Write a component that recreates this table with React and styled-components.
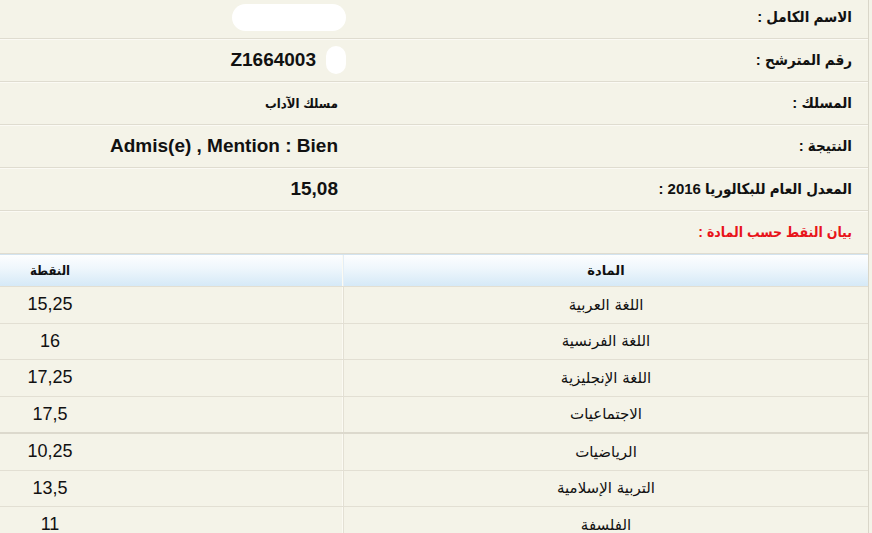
import React from "react";
import styled, { createGlobalStyle } from "styled-components";

const GlobalStyle = createGlobalStyle`
  html, body { margin: 0; padding: 0; }
  body {
    background: #f4f3e8;
    font-family: "Liberation Sans", "DejaVu Sans Condensed", "DejaVu Sans", Arial, sans-serif;
    color: #111;
    overflow: hidden;
  }
`;

const Page = styled.div`
  width: 868px;
  direction: rtl;
  border-right: 1px solid #d9d6c9;
  background: #f4f3e8;
  margin-top: -4px;
`;

const InfoRow = styled.div`
  display: grid;
  grid-template-columns: 513px 1fr;
  height: 42px;
  border-bottom: 1px solid #dfdcd0;
  box-shadow: 0 1px 0 #fbfaf4;
`;

const Label = styled.div`
  display: flex;
  align-items: center;
  padding-right: 16px;
  font-weight: bold;
  color: ${(p) => (p.$red ? "#e8141b" : "#111")};
  font-size: ${(p) => (p.$red ? "14px" : "15px")};
`;

const Value = styled.div`
  display: flex;
  align-items: center;
  gap: 10px;
  padding-right: 17px;
  font-weight: bold;
  font-size: ${(p) => (p.$small ? "13px" : "19px")};
  white-space: nowrap;
`;

const Blot = styled.span`
  display: inline-block;
  width: ${(p) => p.$w}px;
  height: ${(p) => p.$h}px;
  background: #ffffff;
  border-radius: 14px;
  margin-right: -8px;
  filter: blur(0.6px);
`;

const Grades = styled.div`
  border-top: 1px solid #d3e3ef;
`;

const GradeRow = styled.div`
  display: grid;
  grid-template-columns: 525px 1fr;
  height: ${(p) => (p.$head ? "31px" : "35.5px")};
  border-bottom: ${(p) => (p.$thick ? "2px solid #dcd9cd" : "1px solid #e2dfd3")};
  background: ${(p) =>
    p.$head ? "linear-gradient(to bottom, #fdfeff 0%, #eef6fc 45%, #d5e9f7 100%)" : "transparent"};
`;

const SubjectCell = styled.div`
  display: flex;
  align-items: center;
  justify-content: center;
  border-left: 1px solid ${(p) => (p.$head ? "#e4eef6" : "#e3e0d4")};
  box-shadow: -1px 0 0 #fbfaf3;
  font-size: ${(p) => (p.$head ? "13px" : "15px")};
  font-weight: ${(p) => (p.$head ? "bold" : "normal")};
  font-family: "DejaVu Sans", sans-serif;
`;

const ScoreCell = styled.div`
  display: flex;
  align-items: center;
  justify-content: center;
  padding-right: 243px;
  font-size: ${(p) => (p.$head ? "13px" : "18px")};
  font-weight: ${(p) => (p.$head ? "bold" : "normal")};
`;

const info = [
  { label: "الاسم الكامل :", value: null, blot: { w: 114, h: 27 } },
  { label: "رقم المترشح :", value: "Z1664003", blot: { w: 20, h: 28 } },
  { label: "المسلك :", value: "مسلك الآداب", small: true },
  { label: "النتيجة :", value: "Admis(e) , Mention : Bien", ltr: true },
  { label: "المعدل العام للبكالوريا 2016 :", value: "15,08", ltr: true },
];

const grades = [
  ["اللغة العربية", "15,25"],
  ["اللغة الفرنسية", "16"],
  ["اللغة الإنجليزية", "17,25"],
  ["الاجتماعيات", "17,5", true],
  ["الرياضيات", "10,25"],
  ["التربية الإسلامية", "13,5"],
  ["الفلسفة", "11"],
];

export default function App() {
  return (
    <>
      <GlobalStyle />
      <Page>
        {info.map((r, i) => (
          <InfoRow key={i}>
            <Label>{r.label}</Label>
            <Value $small={r.small}>
              {r.blot && <Blot $w={r.blot.w} $h={r.blot.h} />}
              {r.value && <span dir={r.ltr ? "ltr" : undefined}>{r.value}</span>}
            </Value>
          </InfoRow>
        ))}
        <InfoRow>
          <Label $red>بيان النقط حسب المادة :</Label>
          <Value />
        </InfoRow>
        <Grades>
          <GradeRow $head>
            <SubjectCell $head>المادة</SubjectCell>
            <ScoreCell $head>النقطة</ScoreCell>
          </GradeRow>
          {grades.map(([s, n, thick], i) => (
            <GradeRow key={i} $thick={thick}>
              <SubjectCell>{s}</SubjectCell>
              <ScoreCell dir="ltr">{n}</ScoreCell>
            </GradeRow>
          ))}
        </Grades>
      </Page>
    </>
  );
}
